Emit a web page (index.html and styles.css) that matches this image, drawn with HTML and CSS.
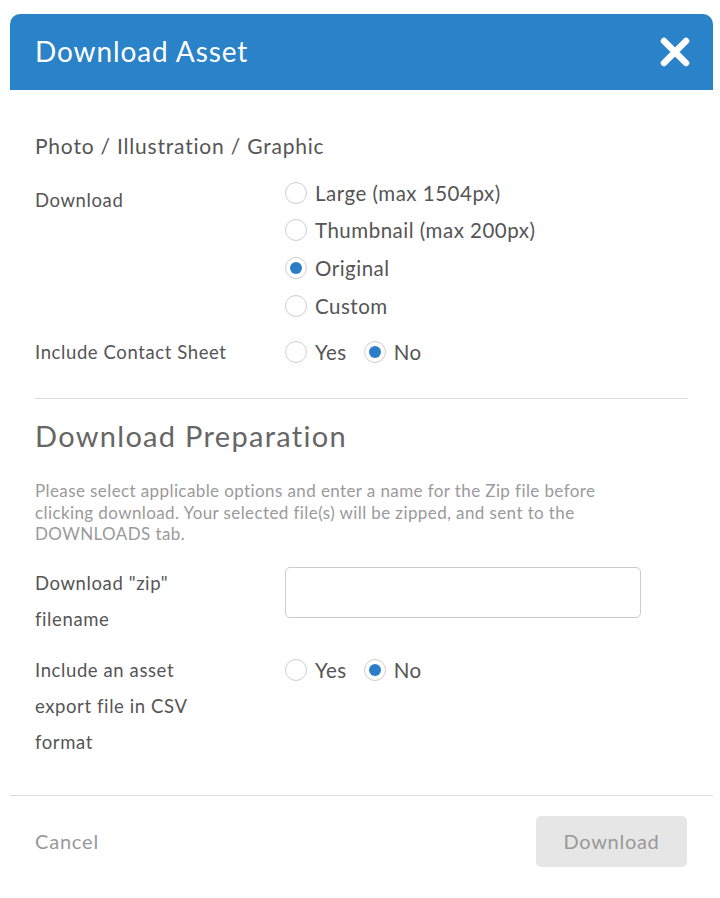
FILE: index.html
```html
<!DOCTYPE html>
<html lang="en">
<head>
<meta charset="utf-8">
<title>Download Asset</title>
<link rel="stylesheet" href="styles.css">
</head>
<body>
<div class="dialog">
  <div class="header">
    <h1 class="title">Download Asset</h1>
    <button class="close" aria-label="Close">
      <svg width="30" height="30" viewBox="0 0 30 30"><path d="M4 4 L26 26 M26 4 L4 26" stroke="#fff" stroke-width="6.5" stroke-linecap="round"/></svg>
    </button>
  </div>
  <div class="body">
    <div class="type">Photo / Illustration / Graphic</div>
    <div class="row row-download">
      <div class="label label-offset">Download</div>
      <div class="options">
        <label class="opt"><span class="radio"></span>Large (max 1504px)</label>
        <label class="opt"><span class="radio"></span>Thumbnail (max 200px)</label>
        <label class="opt"><span class="radio checked"></span>Original</label>
        <label class="opt"><span class="radio"></span>Custom</label>
      </div>
    </div>
    <div class="row row-contact">
      <div class="label">Include Contact Sheet</div>
      <div class="inline">
        <label class="opt"><span class="radio"></span>Yes</label>
        <label class="opt"><span class="radio checked"></span>No</label>
      </div>
    </div>
    <hr class="divider">
    <h2 class="section">Download Preparation</h2>
    <p class="help">Please select applicable options and enter a name for the Zip file before clicking download. Your selected file(s) will be zipped, and sent to the DOWNLOADS tab.</p>
    <div class="row row-zip">
      <div class="label tall">Download "zip"<br>filename</div>
      <div><input class="field" type="text"></div>
    </div>
    <div class="row row-csv">
      <div class="label tall">Include an asset<br>export file in CSV<br>format</div>
      <div class="inline">
        <label class="opt"><span class="radio"></span>Yes</label>
        <label class="opt"><span class="radio checked"></span>No</label>
      </div>
    </div>
  </div>
  <div class="footer">
    <span class="cancel">Cancel</span>
    <button class="download">Download</button>
  </div>
</div>
</body>
</html>
```
FILE: styles.css
```css
* { box-sizing: border-box; }
html, body { margin: 0; padding: 0; background: #fff; }
body { font-family: Lato, "Open Sans", Arial, sans-serif; color: #555; }

.dialog {
  margin: 14px 0 0 10px;
  width: 703px;
  min-height: 884px;
  background: #fff;
  border-radius: 10px 10px 0 0;
  box-shadow: 0 0 2px rgba(0,0,0,0.06);
}

.header {
  height: 76px;
  background: #2a82c8;
  border-radius: 10px 10px 0 0;
  display: flex;
  align-items: center;
  justify-content: space-between;
  padding: 0 22px 0 25px;
}
.title {
  margin: -3px 0 0;
  font-weight: 400;
  font-size: 28px;
  color: #fff;
  letter-spacing: 0.9px;
}
.close {
  background: none;
  border: 0;
  padding: 0;
  width: 32px;
  height: 32px;
  display: flex;
  align-items: center;
  justify-content: center;
  margin-top: 0;
}

.body { padding: 44px 25px 35px; }

.type {
  font-size: 21px;
  line-height: 24px;
  color: #555;
  letter-spacing: 0.8px;
}

.row {
  display: grid;
  grid-template-columns: 250px 1fr;
}
.row-download { margin-top: 16px; }
.row-contact { margin-top: 9px; }
.row-zip { margin-top: 20px; }
.row-csv { margin-top: 15px; }

.label {
  font-size: 18.5px;
  line-height: 38px;
  color: #555;
  letter-spacing: 0.6px;
}
.label-offset { padding-top: 7px; }
.label.tall { line-height: 36px; }

.options { display: flex; flex-direction: column; }
.inline { display: flex; gap: 17px; height: 38px; }
.row-csv .inline { height: 36px; }

.opt {
  display: flex;
  align-items: center;
  height: 38px;
  font-size: 20.5px;
  color: #555;
  letter-spacing: 0.5px;
}
.row-download .opt { height: 37.6px; }
.row-csv .opt { height: 36px; }

.radio {
  width: 22px;
  height: 22px;
  border-radius: 50%;
  border: 1px solid #cfcfcf;
  margin-right: 8px;
  display: inline-flex;
  align-items: center;
  justify-content: center;
  flex: none;
}
.radio.checked { border-color: #d6cbc6; }
.radio.checked::after {
  content: "";
  width: 12px;
  height: 12px;
  border-radius: 50%;
  background: #2a7dc6;
}

.divider {
  border: 0;
  border-top: 1px solid #dcdcdc;
  margin: 27px 0 0;
}

.section {
  margin: 20px 0 0;
  font-weight: 400;
  font-size: 29px;
  line-height: 34px;
  color: #666;
  letter-spacing: 1.3px;
}

.help {
  margin: 27px 0 0;
  font-size: 17px;
  line-height: 21.5px;
  color: #9a9a9a;
  letter-spacing: 0.4px;
  max-width: 580px;
}

.field {
  margin-top: 2px;
  width: 356px;
  height: 51px;
  border: 1px solid #cccccc;
  border-radius: 5px;
  background: #fff;
}

.footer {
  border-top: 1px solid #dcdcdc;
  padding: 20px 26px 0 25px;
  display: flex;
  align-items: center;
  justify-content: space-between;
}
.cancel {
  font-size: 20px;
  color: #999;
  letter-spacing: 0.8px;
}
.download {
  width: 151px;
  height: 51px;
  background: #e6e6e6;
  border: 0;
  border-radius: 5px;
  font-family: inherit;
  font-size: 20px;
  letter-spacing: 0.7px;
  color: #999;
}
```
